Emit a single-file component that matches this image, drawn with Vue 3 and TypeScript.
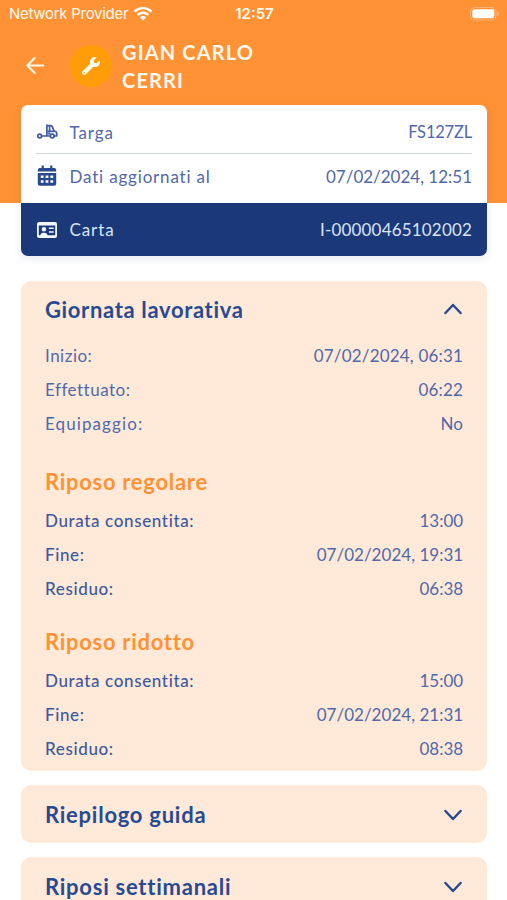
<script setup lang="ts">
import { ref } from 'vue'

interface Row {
  label: string
  value: string
}
interface Rest {
  title: string
  rows: Row[]
}

const open = ref(true)

const workday: Row[] = [
  { label: 'Inizio:', value: '07/02/2024, 06:31' },
  { label: 'Effettuato:', value: '06:22' },
  { label: 'Equipaggio:', value: 'No' },
]

const rests: Rest[] = [
  {
    title: 'Riposo regolare',
    rows: [
      { label: 'Durata consentita:', value: '13:00' },
      { label: 'Fine:', value: '07/02/2024, 19:31' },
      { label: 'Residuo:', value: '06:38' },
    ],
  },
  {
    title: 'Riposo ridotto',
    rows: [
      { label: 'Durata consentita:', value: '15:00' },
      { label: 'Fine:', value: '07/02/2024, 21:31' },
      { label: 'Residuo:', value: '08:38' },
    ],
  },
]

const collapsed: string[] = ['Riepilogo guida', 'Riposi settimanali']
</script>

<template>
  <div class="screen">
    <header class="top">
      <div class="status">
        <div class="carrier">
          <span>Network Provider</span>
          <svg class="wifi" viewBox="0 0 20 15">
            <path d="M1.6 5.6a12 12 0 0 1 16.8 0" />
            <path d="M4.7 8.9a7.6 7.6 0 0 1 10.6 0" />
            <path class="fill" d="M10 14.4 6.9 11.2a4.4 4.4 0 0 1 6.2 0z" />
          </svg>
        </div>
        <span class="clock">12:57</span>
        <svg class="battery" viewBox="0 0 30 14">
          <rect class="shell" x=".5" y=".5" width="25.5" height="12.5" rx="3.8" />
          <rect class="charge" x="2.3" y="2.3" width="22" height="9" rx="2.2" />
          <path class="tip" d="M27.3 4.8v4c1.1-.3 1.7-1.1 1.7-2s-.6-1.700-1.700-2z" />
        </svg>
      </div>
      <div class="title-bar">
        <svg class="back" viewBox="0 0 20 20">
          <path d="M18.300 9.500H2.600M9.700 2 2.300 9.500l7.400 7.500" />
        </svg>
        <div class="avatar">
          <svg viewBox="0 0 512 512">
            <path d="M507.700 109.100c-2.200-9-13.500-12.100-20.100-5.500l-74.400 74.400-67.900-11.300L334 98.800l74.400-74.400c6.600-6.600 3.400-17.900-5.700-20.200-47.400-11.700-99.600.9-136.600 37.900-39.600 39.600-50.500 97.100-34.100 147.200L18.700 402.800c-25 25-25 65.500 0 90.500s65.500 25 90.500 0l213.200-213.200c50.100 16.700 107.500 5.700 147.400-34.200 37.100-37.100 49.700-89.300 37.900-136.800zM64 472c-13.200 0-24-10.800-24-24s10.700-24 24-24 24 10.700 24 24-10.700 24-24 24z" />
          </svg>
        </div>
        <h1>GIAN CARLO<br />CERRI</h1>
      </div>
    </header>

    <section class="vehicle">
      <div class="info">
        <svg class="icon truck" viewBox="0 0 22 18">
          <g class="line">
            <circle cx="3.700" cy="13" r="1.900" />
            <circle cx="16.300" cy="13" r="1.900" />
            <path d="M5.700 13h8.500M10.900 12.500V1.500M11 2.600h3.700q1.200 0 1.700 1.200l1.700 4.200 1.800.8q.8.400.8 1.400V13h-2.800" />
            <path d="M11.500 8.300h6.300M13.600 3v5M12 10.600h2.500" />
          </g>
        </svg>
        <span class="name">Targa</span>
        <span class="plate">FS127ZL</span>
      </div>
      <div class="info updated">
        <svg class="icon" viewBox="0 0 22 22">
          <path fill-rule="evenodd" d="M5.600.5h2.200v2.500h6.400V.5h2.200V3h1.800q2 0 2 2v1.500H1.800V5q0-2 2-2h1.800zM1.800 7.900h18.400v10.800q0 2-2 2H3.800q-2 0-2-2zm3 2.600v2.600h2.800v-2.600zm4.800 0v2.600h2.800v-2.600zm4.800 0v2.600h2.800v-2.600zM4.800 15.200v2.600h2.800v-2.600zm4.800 0v2.600h2.800v-2.600zm4.800 0v2.600h2.800v-2.600z" />
        </svg>
        <span class="name long">Dati aggiornati al</span>
        <span class="date">07/02/2024, 12:51</span>
      </div>
      <div class="info card">
        <svg class="icon" viewBox="0 0 22 18">
          <path fill-rule="evenodd" d="M3 1h16q2 0 2 2v12q0 2-2 2H3q-2 0-2-2V3q0-2 2-2zM2.800 4.500v9.700h1.400q.3-2.500 2.900-2.500h1.600q2.600 0 2.900 2.500h7.600V4.500zM7.900 6a2.300 2.300 0 1 1 0 4.600 2.300 2.300 0 0 1 0-4.600zM12.900 6.500h4.800v1.600h-4.800zm0 3.700h4.800v1.600h-4.800z" />
        </svg>
        <span class="name">Carta</span>
        <span class="number">I-00000465102002</span>
      </div>
    </section>

    <main>
      <section class="panel">
        <button class="head" type="button" @click="open = !open">
          <span>Giornata lavorativa</span>
          <svg class="chevron" :class="{ up: open }" viewBox="0 0 20 12">
            <path :d="open ? 'M2.400 10 10 2l7.600 8' : 'M2.400 2 10 10l7.600-8'" />
          </svg>
        </button>
        <div v-if="open" class="content">
          <div class="group workday">
            <div v-for="row in workday" :key="row.label" class="row">
              <span>{{ row.label }}</span>
              <span class="value">{{ row.value }}</span>
            </div>
          </div>
          <div v-for="rest in rests" :key="rest.title" class="group rest">
            <h2>{{ rest.title }}</h2>
            <div v-for="row in rest.rows" :key="row.label" class="row strong">
              <span>{{ row.label }}</span>
              <span class="value">{{ row.value }}</span>
            </div>
          </div>
        </div>
      </section>
      <section v-for="title in collapsed" :key="title" class="panel">
        <button class="head closed" type="button">
          <span>{{ title }}</span>
          <svg class="chevron" viewBox="0 0 20 12">
            <path d="M2.400 2 10 10l7.600-8" />
          </svg>
        </button>
      </section>
    </main>
  </div>
</template>

<style>
body {
  background: #fff;
  overflow: hidden;
}
</style>

<style scoped>
.screen {
  box-sizing: border-box;
  width: 507px;
  height: 900px;
  overflow: hidden;
  background: #fff;
  color: #5168aa;
  font-family: Lato, "Open Sans", sans-serif;
  font-size: 17px;
}
.top {
  height: 203px;
  background: #ff9235;
  color: #fff8eb;
}
.status {
  display: grid;
  grid-template-columns: 1fr auto 1fr;
  align-items: center;
  height: 28px;
  padding: 0 7px 0 9px;
  font-family: Inter, sans-serif;
  font-size: 15px;
  line-height: 28px;
}
.carrier {
  display: flex;
  align-items: center;
  gap: 5px;
  letter-spacing: -0.28px;
}
.wifi {
  width: 20px;
  height: 15px;
  margin-top: -2px;
  fill: none;
  stroke: #fff;
  stroke-width: 2.400;
}
.wifi .fill {
  fill: #fff;
  stroke: none;
}
.clock {
  font-weight: 600;
}
.battery {
  justify-self: end;
  width: 30px;
  height: 14px;
}
.shell {
  fill: none;
  stroke: #ffb679;
}
.charge {
  fill: #fff;
}
.tip {
  fill: #ffb679;
}
.title-bar {
  display: flex;
  align-items: center;
  height: 76px;
  padding-left: 25px;
}
.back {
  width: 20px;
  height: 20px;
  fill: none;
  stroke: #fff8eb;
  stroke-width: 2;
  stroke-linecap: round;
  stroke-linejoin: round;
}
.avatar {
  display: flex;
  align-items: center;
  justify-content: center;
  width: 42px;
  height: 42px;
  margin: 0 10px 0 25px;
  border-radius: 50%;
  background: #ff9d09;
}
.avatar svg {
  width: 18px;
  height: 18px;
  fill: #fffdf0;
}
h1 {
  margin: 0;
  font-size: 20px;
  font-weight: 700;
  line-height: 28px;
  letter-spacing: 1.15px;
}
.vehicle {
  position: relative;
  margin: -98px 20px 0 21px;
  overflow: hidden;
  border-radius: 7px;
  background: #fff;
  box-shadow: 0 3px 8px rgba(30, 50, 100, 0.1);
}
.info {
  display: flex;
  align-items: center;
  box-sizing: border-box;
  height: 49px;
  margin: 0 15px;
  padding-top: 6px;
  border-bottom: 1px solid #d3dade;
}
.info.updated {
  height: 49px;
  padding: 0 0 5px;
  border: 0;
}
.info.card {
  height: 53px;
  margin: 0;
  padding: 0 15px;
  border: 0;
  background: #1b3879;
  color: #d9e4fa;
}
.icon {
  width: 22px;
  height: 22px;
  margin-right: 11.500px;
  fill: #294a91;
}
.truck {
  height: 18px;
}
.card .icon {
  height: 18px;
  fill: #f2f7ff;
}
.line {
  fill: none;
  stroke: #3e5aa0;
  stroke-width: 1.700;
  stroke-linejoin: round;
}
.name {
  flex: 1;
  letter-spacing: 0.9px;
}
.name.long {
  letter-spacing: 0.82px;
}
.plate {
  font-size: 16.500px;
  letter-spacing: -0.2px;
}
.date {
  letter-spacing: -0.01px;
}
.number {
  letter-spacing: 0.18px;
}
main {
  display: flex;
  flex-direction: column;
  gap: 14.500px;
  padding: 25px 20px 0 21px;
}
.panel {
  border-radius: 10px;
  background: #ffead9;
}
.head {
  display: flex;
  align-items: center;
  justify-content: space-between;
  width: 100%;
  height: 57.500px;
  padding: 1px 24px 0;
  border: 0;
  background: none;
  color: #294a91;
  font: 700 22px/26px Lato, sans-serif;
  letter-spacing: 0.65px;
}
.head.closed {
  padding-top: 2px;
  letter-spacing: 0.75px;
}
.chevron {
  width: 20px;
  height: 12px;
  fill: none;
  stroke: #294a91;
  stroke-width: 2.500;
  stroke-linecap: round;
  stroke-linejoin: round;
}
.chevron.up {
  margin-bottom: 3px;
}
.content {
  padding: 0 24px 4.700px;
}
.row {
  display: flex;
  align-items: center;
  justify-content: space-between;
  height: 34.100px;
  letter-spacing: 0.5px;
}
.workday .row:last-child > span:first-child {
  letter-spacing: 1.1px;
}
.row .value {
  margin-right: -0.200px;
  letter-spacing: 0.2px;
}
.row.strong .value {
  letter-spacing: 0.02px;
}
.strong > span:first-child {
  color: #3e589e;
  font-weight: 500;
  letter-spacing: 0.63px;
}
.rest {
  padding-top: 28px;
}
.rest + .rest {
  padding-top: 23.200px;
}
h2 {
  height: 34.700px;
  margin: 0;
  color: #ff9235;
  font-size: 22px;
  font-weight: 700;
  line-height: 26px;
  letter-spacing: 0.7px;
}
</style>
